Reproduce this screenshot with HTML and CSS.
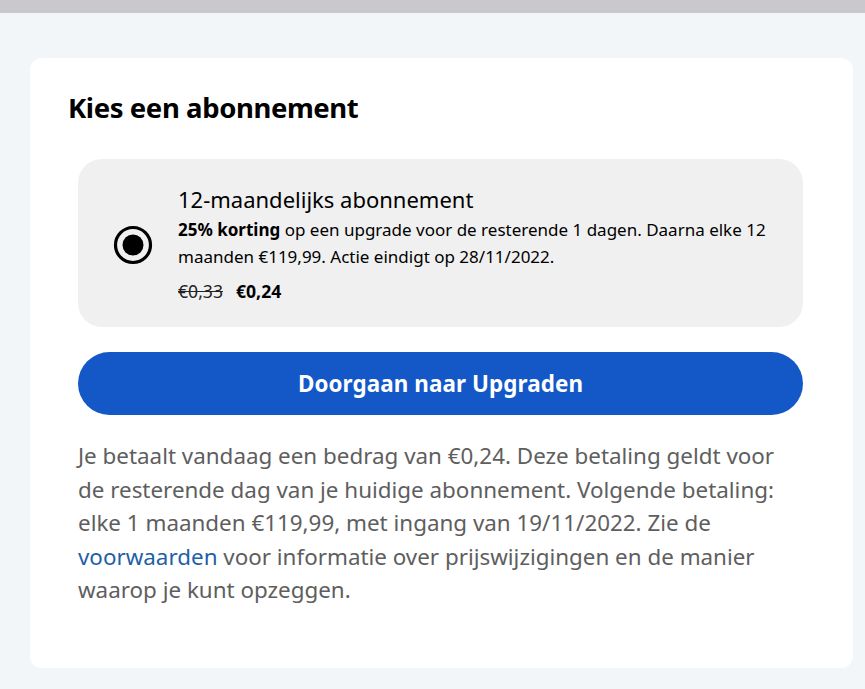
FILE: index.html
```html
<!DOCTYPE html>
<html lang="nl">
<head>
<meta charset="utf-8">
<link rel="stylesheet" href="styles.css">
</head>
<body>
<div class="topbar"></div>
<main class="page">
  <section class="card">
    <h1 class="title">Kies een abonnement</h1>
    <div class="option">
      <div class="radio"><svg width="40" height="40" viewBox="0 0 40 40"><circle cx="20" cy="20" r="17.5" fill="none" stroke="#000" stroke-width="3.2"/><circle cx="20" cy="20" r="10.5" fill="#000"/></svg></div>
      <div class="option-body">
        <div class="option-name">12-maandelijks abonnement</div>
        <p class="option-desc"><b>25% korting</b> op een upgrade voor de resterende 1 dagen. Daarna elke 12 maanden €119,99. Actie eindigt op 28/11/2022.</p>
        <div class="prices"><s class="old">€0,33</s><b class="new">€0,24</b></div>
      </div>
    </div>
    <button class="cta">Doorgaan naar Upgraden</button>
    <p class="note">Je betaalt vandaag een bedrag van €0,24. Deze betaling geldt voor de resterende dag van je huidige abonnement. Volgende betaling: elke 1 maanden €119,99, met ingang van 19/11/2022. Zie de <a class="link" href="#">voorwaarden</a> voor informatie over prijswijzigingen en de manier waarop je kunt opzeggen.</p>
  </section>
</main>
</body>
</html>
```
FILE: styles.css
```css
html, body {
  margin: 0;
  padding: 0;
}
body {
  background: #f3f6f9;
  font-family: "Noto Sans", "Open Sans", sans-serif;
  color: #000;
  width: 865px;
  height: 689px;
  overflow: hidden;
}
.topbar {
  height: 13px;
  background: #c9c8cd;
}
.page {
  padding: 45px 12px 0 30px;
}
.card {
  background: #fff;
  border-radius: 12px;
  padding: 32px 50px 48px 48px;
  height: 530px;
}
.title {
  margin: 0 0 0 -10px;
  font-size: 27.5px;
  font-weight: 700;
  letter-spacing: -0.4px;
  line-height: 36px;
}
.option {
  margin-top: 33px;
  background: #f0f0f0;
  border-radius: 24px;
  display: flex;
  align-items: center;
  padding: 26px 30px 24px 35px;
  gap: 25px;
}
.radio {
  width: 40px;
  height: 40px;
  flex: none;
  margin-top: 2px;
}
.radio svg { display: block; }
.option-name {
  font-size: 22px;
  line-height: 28px;
}
.option-desc {
  margin: 2.5px 0 0;
  font-size: 17px;
  line-height: 27px;
}
.prices {
  margin-top: 9.5px;
  font-size: 17.6px;
  line-height: 24px;
  display: flex;
  gap: 13px;
}
.old { color: #222; }
.new { font-weight: 700; }
.cta {
  display: block;
  width: 100%;
  margin-top: 25px;
  height: 63px;
  border: none;
  border-radius: 32px;
  background: #1458c8;
  color: #fff;
  font-family: "Noto Sans", "Open Sans", sans-serif;
  font-size: 22.4px;
  font-weight: 700;
  letter-spacing: 0.1px;
}
.note {
  margin: 24px 0 0;
  font-size: 22.4px;
  line-height: 33.5px;
  color: #5e5e5e;
}
.link {
  color: #1f5fa6;
  text-decoration: none;
}
```
